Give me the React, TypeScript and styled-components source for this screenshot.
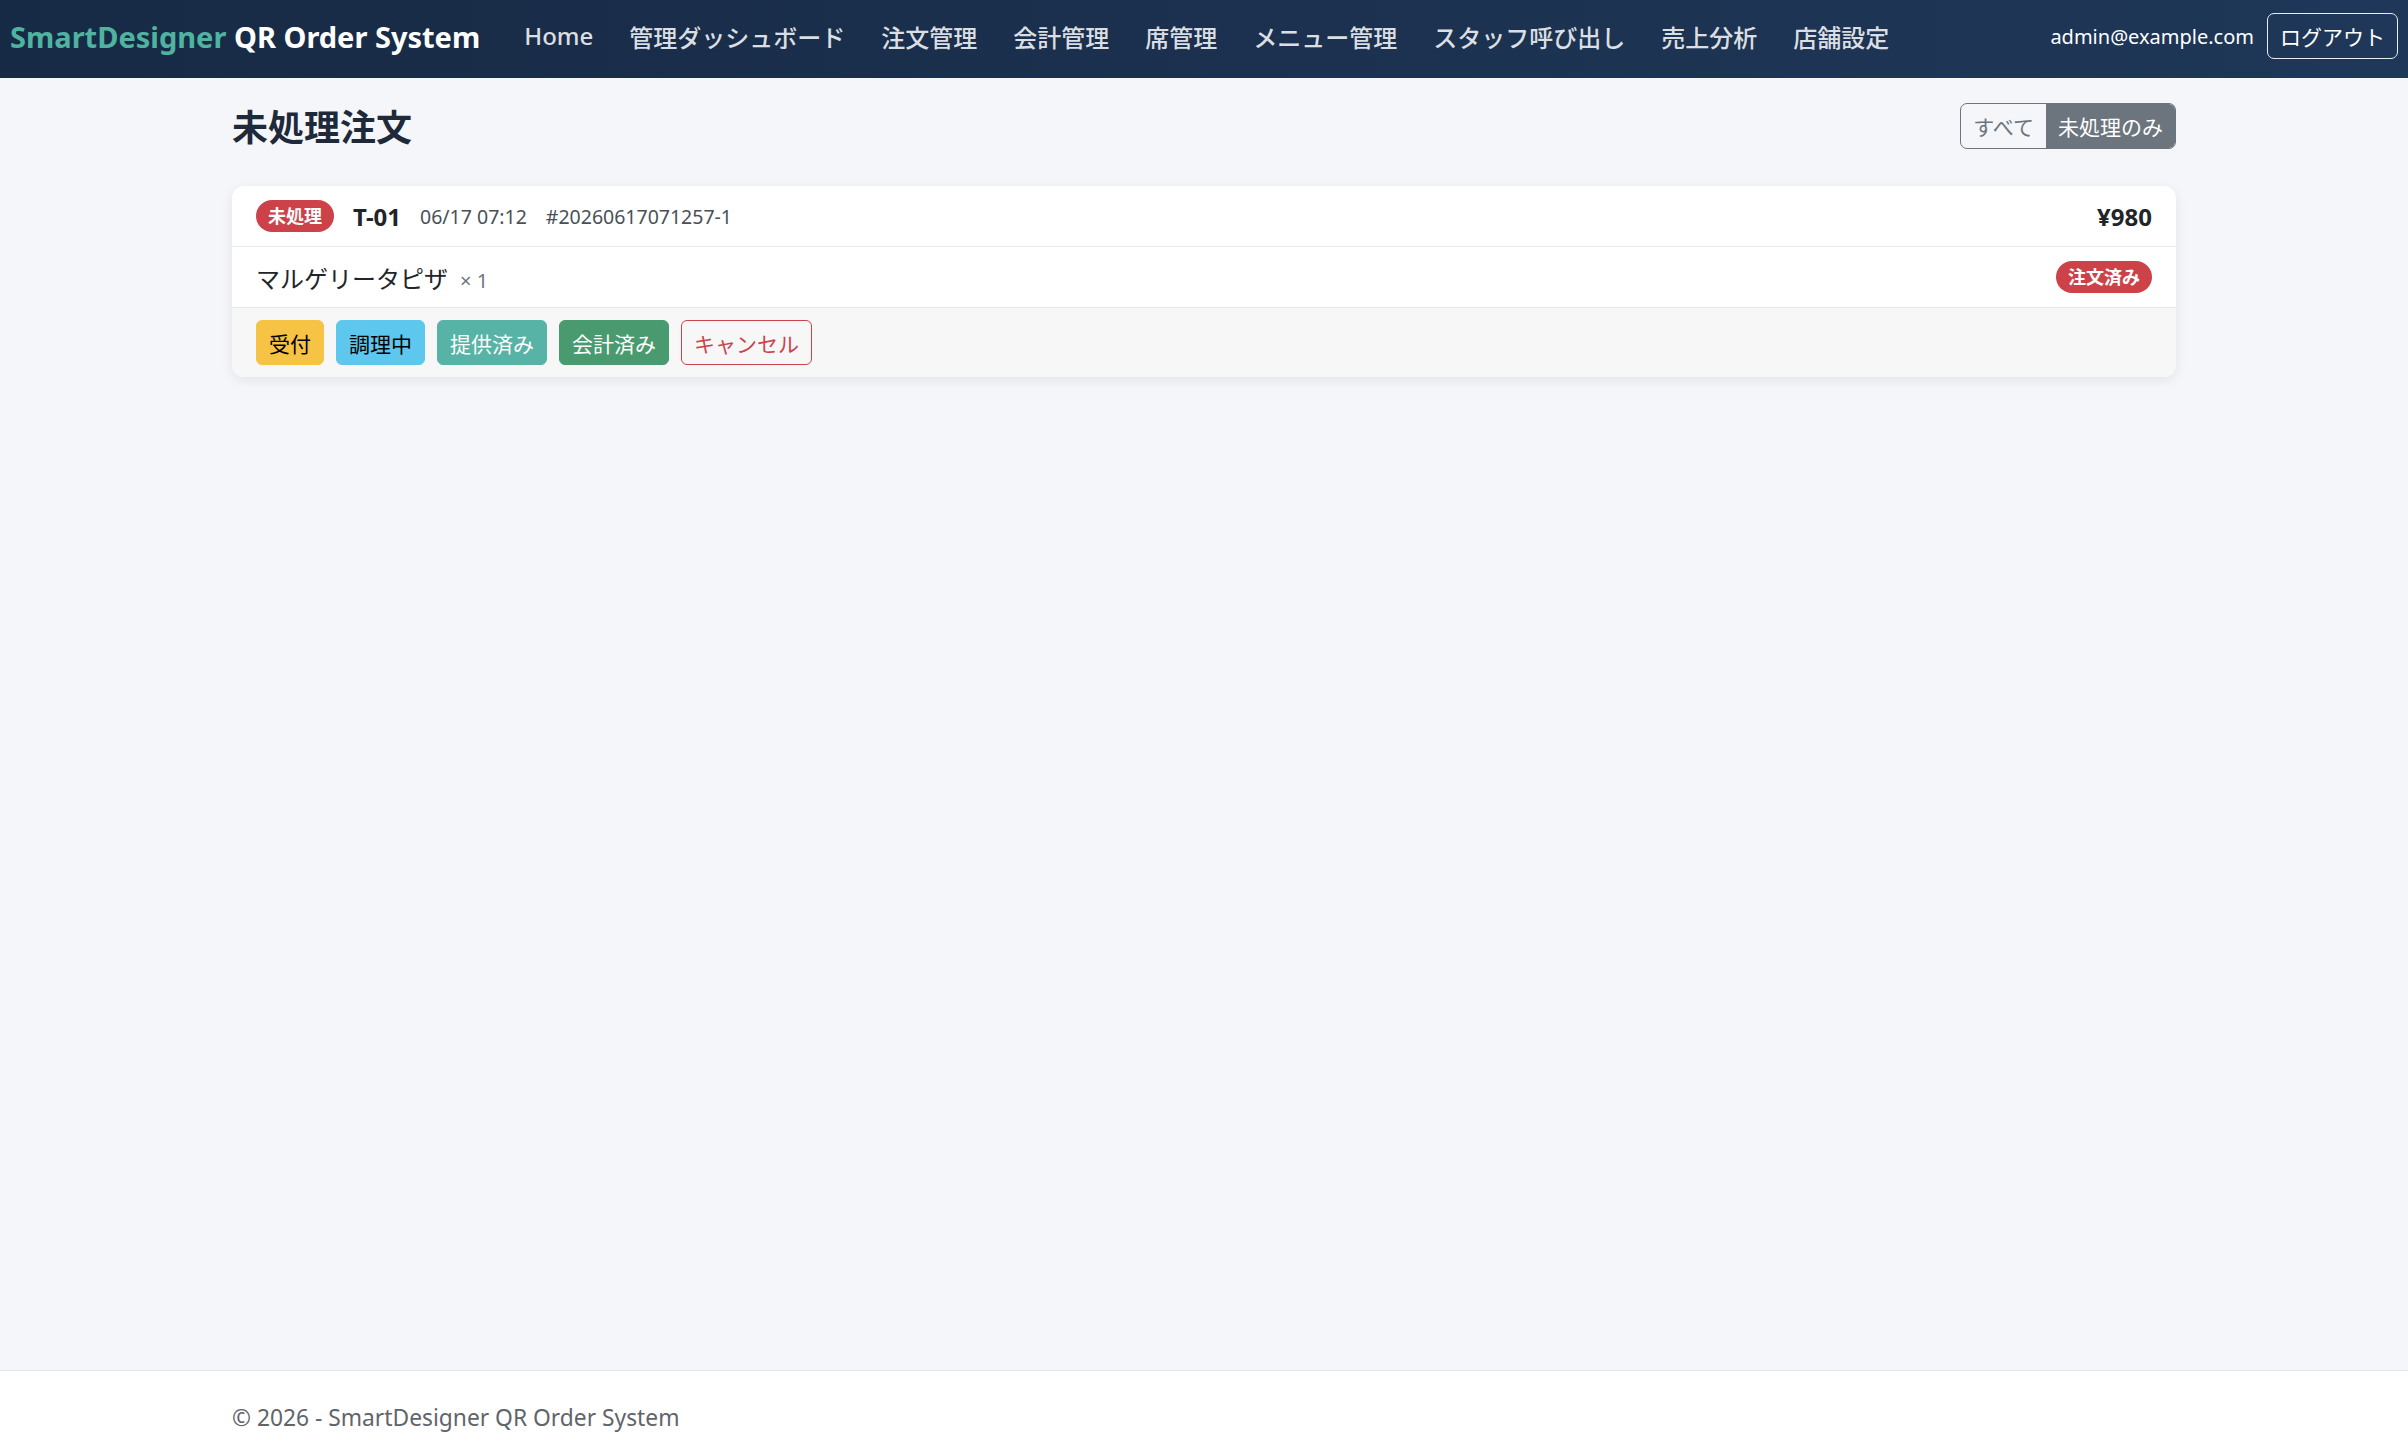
import styled, { createGlobalStyle } from "styled-components";

const GlobalStyle = createGlobalStyle`
  html, body {
    margin: 0;
    padding: 0;
  }

  body {
    background: #f4f6f9;
    color: #212529;
    font-family: "Noto Sans", "Noto Sans CJK JP", sans-serif;
  }

  #root {
    min-height: 100vh;
    display: flex;
    flex-direction: column;
  }
`;

const Navbar = styled.nav`
  display: flex;
  align-items: center;
  height: 78px;
  padding: 0 10px 6px;
  box-sizing: border-box;
  background: linear-gradient(90deg, #172a45 0%, #1f3758 100%);
`;

const Brand = styled.a`
  font-size: 29px;
  font-weight: 700;
  color: #fff;
  white-space: nowrap;
  margin-right: 26px;
  text-decoration: none;

  span {
    color: #4fb3a0;
  }
`;

const NavList = styled.ul`
  display: flex;
  flex: 1;
  margin: 0;
  padding: 0;
  list-style: none;
`;

const NavLink = styled.a`
  display: block;
  padding: 0 18px;
  font-size: 24px;
  font-weight: 500;
  color: rgba(255, 255, 255, 0.85);
  text-decoration: none;
  white-space: nowrap;
`;

const UserArea = styled.div`
  display: flex;
  align-items: center;
  gap: 13px;
`;

const Email = styled.span`
  font-size: 20px;
  color: #fff;
`;

const LogoutButton = styled.button`
  height: 46px;
  padding: 0 12px;
  border: 1px solid #e9ecef;
  border-radius: 7px;
  background: transparent;
  color: #fff;
  font-family: inherit;
  font-size: 21px;
`;

const Main = styled.main`
  flex: 1;
`;

const Container = styled.div`
  max-width: 1944px;
  margin: 0 auto;
`;

const PageHead = styled.div`
  display: flex;
  justify-content: space-between;
  align-items: center;
  padding-top: 21px;
  margin-bottom: 34px;
`;

const Title = styled.h1`
  margin: 0;
  font-size: 36px;
  font-weight: 700;
  color: #1e2a3a;
`;

const FilterGroup = styled.div`
  display: inline-flex;
  border: 1px solid #6c757d;
  border-radius: 7px;
  overflow: hidden;
`;

const FilterButton = styled.button<{ $active?: boolean }>`
  height: 44px;
  padding: 0 12px;
  border: none;
  background: ${(p) => (p.$active ? "#6c757d" : "transparent")};
  color: ${(p) => (p.$active ? "#fff" : "#6c757d")};
  font-family: inherit;
  font-size: 21px;
`;

const Card = styled.div`
  background: #fff;
  border-radius: 12px;
  box-shadow: 0 3px 12px rgba(20, 30, 50, 0.08);
  overflow: hidden;
`;

const CardHeader = styled.div`
  display: flex;
  align-items: center;
  height: 61px;
  padding: 0 24px;
  border-bottom: 1px solid #e4e7eb;
  box-sizing: border-box;
`;

const Badge = styled.span`
  display: inline-block;
  padding: 7px 12px;
  border-radius: 999px;
  background: #cd4149;
  color: #fff;
  font-size: 18px;
  font-weight: 700;
  line-height: 1;
`;

const TableNo = styled.span`
  margin-left: 19px;
  font-size: 24px;
  font-weight: 700;
  color: #212529;
`;

const Meta = styled.span`
  margin-left: 19px;
  font-size: 19.5px;
  color: #495057;
`;

const Price = styled.span`
  margin-left: auto;
  font-size: 24px;
  font-weight: 700;
  color: #212529;
`;

const ItemRow = styled.div`
  display: flex;
  justify-content: space-between;
  align-items: center;
  height: 61px;
  padding: 0 24px;
  border-bottom: 1px solid #e4e7eb;
  box-sizing: border-box;
`;

const ItemName = styled.span`
  font-size: 24px;
  color: #212529;
`;

const Qty = styled.span`
  margin-left: 12px;
  font-size: 20px;
  color: #6c757d;
`;

const CardFooter = styled.div`
  display: flex;
  gap: 12px;
  padding: 12px 24px;
  background: #f7f7f8;
`;

type Variant = "warning" | "info" | "teal" | "success" | "cancel";

const variants: Record<Variant, { bg: string; border: string; color: string }> = {
  warning: { bg: "#f6c344", border: "#f6c344", color: "#000" },
  info: { bg: "#5dc7ed", border: "#5dc7ed", color: "#000" },
  teal: { bg: "#57b3a5", border: "#57b3a5", color: "#fff" },
  success: { bg: "#4a9a6f", border: "#4a9a6f", color: "#fff" },
  cancel: { bg: "transparent", border: "#cc434b", color: "#cc434b" },
};

const ActionButton = styled.button<{ $variant: Variant }>`
  height: 45px;
  padding: 0 12px;
  border: 1px solid ${(p) => variants[p.$variant].border};
  border-radius: 6px;
  background: ${(p) => variants[p.$variant].bg};
  color: ${(p) => variants[p.$variant].color};
  font-family: inherit;
  font-size: 21px;
`;

const Footer = styled.footer`
  height: 84px;
  border-top: 1px solid #e3e6ea;
  background: #fff;
  box-sizing: border-box;
  display: flex;
  align-items: center;
  padding-top: 10px;
`;

const FooterText = styled.div`
  font-size: 22.8px;
  color: #5f656b;
`;

const navItems = [
  "Home",
  "管理ダッシュボード",
  "注文管理",
  "会計管理",
  "席管理",
  "メニュー管理",
  "スタッフ呼び出し",
  "売上分析",
  "店舗設定",
];

const actions: { label: string; variant: Variant }[] = [
  { label: "受付", variant: "warning" },
  { label: "調理中", variant: "info" },
  { label: "提供済み", variant: "teal" },
  { label: "会計済み", variant: "success" },
  { label: "キャンセル", variant: "cancel" },
];

export default function App() {
  return (
    <>
      <GlobalStyle />
      <Navbar>
        <Brand href="#">
          <span>SmartDesigner</span> QR Order System
        </Brand>
        <NavList>
          {navItems.map((item) => (
            <li key={item}>
              <NavLink href="#">{item}</NavLink>
            </li>
          ))}
        </NavList>
        <UserArea>
          <Email>admin@example.com</Email>
          <LogoutButton>ログアウト</LogoutButton>
        </UserArea>
      </Navbar>

      <Main>
        <Container>
          <PageHead>
            <Title>未処理注文</Title>
            <FilterGroup>
              <FilterButton>すべて</FilterButton>
              <FilterButton $active>未処理のみ</FilterButton>
            </FilterGroup>
          </PageHead>

          <Card>
            <CardHeader>
              <Badge>未処理</Badge>
              <TableNo>T-01</TableNo>
              <Meta>06/17 07:12</Meta>
              <Meta>#20260617071257-1</Meta>
              <Price>¥980</Price>
            </CardHeader>
            <ItemRow>
              <ItemName>
                マルゲリータピザ<Qty>× 1</Qty>
              </ItemName>
              <Badge>注文済み</Badge>
            </ItemRow>
            <CardFooter>
              {actions.map((a) => (
                <ActionButton key={a.label} $variant={a.variant}>
                  {a.label}
                </ActionButton>
              ))}
            </CardFooter>
          </Card>
        </Container>
      </Main>

      <Footer>
        <Container style={{ width: "100%" }}>
          <FooterText>© 2026 - SmartDesigner QR Order System</FooterText>
        </Container>
      </Footer>
    </>
  );
}
